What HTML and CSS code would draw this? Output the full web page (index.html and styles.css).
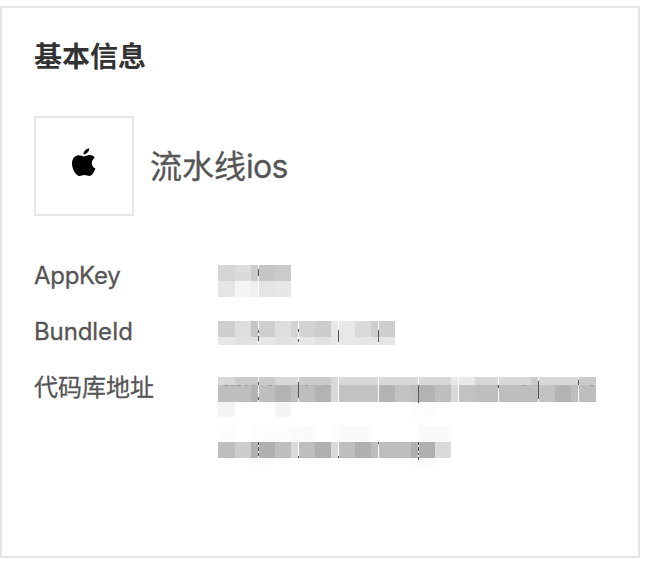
FILE: index.html
```
<!DOCTYPE html>
<html lang="zh-CN">

<head>
    <meta charset="utf-8">
    <title>基本信息</title>
    <link rel="stylesheet" href="styles.css">
</head>

<body>
    <section class="card">
        <h2 class="card-title">基本信息</h2>

        <div class="app">
            <div class="app-icon">
                <svg width="24" height="30" viewBox="0 0 24 30">
                    <path d="M17.2 0.2C17.5 3 14.8 6.3 11.5 6.4C11.2 3.5 14.2 0.7 17.2 0.2Z" />
                    <path d="M12 8.4C13.5 8.4 15.2 7.1 17.7 7.1C20 7.1 21.8 8.2 22.7 9.7C18.6 12.4 19 18.7 23.4 20.5C22.2 23.9 20.2 27.9 17.4 27.9C15.5 27.9 14.7 27.1 12.3 27.1C10 27.1 9.4 28 7.6 28C4.1 28 0 21.4 0 15.5C0 10 3.4 7.2 6.8 7.2C9.1 7.2 10.8 8.4 12 8.4Z" />
                </svg>
            </div>
            <span class="app-name">流水线<span class="app-type">ios</span></span>
        </div>

        <dl class="info">
            <dt class="key-label">AppKey</dt>
            <dd>
                <!-- 打码内容 -->
                <svg class="mosaic" width="73" height="33" viewBox="218 265 73 33">
                    <path fill="#d5d5d5" d="M218 265h17v16h-17z" />
                    <path fill="#dbdbdb" d="M235 265h16v16h-16z" />
                    <path fill="#cbcbcb" d="M251 265h7v16h-7z" />
                    <path fill="#c5c5c5" d="M259 265h16v16h-16z" />
                    <path fill="#cbcbcb" d="M275 265h16v16h-16z" />
                    <path fill="#e5e5e5" d="M218 281h17v16h-17zM259 281h16v16h-16z" />
                    <path fill="#f4f4f4" d="M235 281h16v16h-16z" />
                    <path fill="#efefef" d="M251 281h7v16h-7z" />
                    <path fill="#e7e7e7" d="M275 281h16v16h-16z" />
                    <path fill="#555" d="M258 269h1v7h-1z" />
                </svg>
            </dd>

            <dt class="bundle-label">BundleId</dt>
            <dd>
                <svg class="mosaic" width="177" height="25" viewBox="218 321 177 25">
                    <path fill="#cfcfcf" d="M218 321h17v16h-17zM259 321h16v16h-16z" />
                    <path fill="#dedede" d="M235 321h16v16h-16zM275 321h16v16h-16z" />
                    <path fill="#c5c5c5" d="M251 321h7v16h-7z" />
                    <path fill="#d3d3d3" d="M291 321h7v16h-7zM299 321h16v16h-16z" />
                    <path fill="#cdcdcd" d="M315 321h16v16h-16z" />
                    <path fill="#e8e8e8" d="M331 321h7v24h-7zM339 321h16v24h-16z" />
                    <path fill="#dadada" d="M355 321h16v16h-16z" />
                    <path fill="#cecece" d="M371 321h7v16h-7zM379 321h16v16h-16z" />
                    <path fill="#e7e7e7" d="M218 337h17v8h-17zM259 337h16v8h-16zM299 337h16v8h-16z" />
                    <path fill="#e1e1e1" d="M235 337h23v8h-23zM275 337h23v8h-23zM315 337h16v8h-16z" />
                    <path fill="#e5e5e5" d="M355 337h23v8h-23zM379 337h16v8h-16z" />
                    <path fill="#555" d="M258 330h1v3h-1zM258 336h1v5h-1zM298 329h1v3h-1zM298 339h1v3h-1zM338 330h1v12h-1zM378 330h1v12h-1z" />
                </svg>
            </dd>

            <dt>代码库地址</dt>
            <dd>
                <svg class="mosaic" width="378" height="88" viewBox="218 377 378 88">
                    <path fill="#d8d8d8" d="M218 377h378v8h-378z" />
                    <path fill="#cbcbcb" d="M235 377h40v8h-40zM299 377h32v8h-32zM531 377h7v8h-7zM579 377h17v8h-17z" />
                    <path fill="#bebebe" d="M218 385h378v17h-378z" />
                    <path fill="#b3b3b3" d="M251 385h7v17h-7zM275 385h16v17h-16zM315 385h16v17h-16zM379 385h16v17h-16zM419 385h16v17h-16zM555 385h16v17h-16z" />
                    <path fill="#c2c2c2" d="M339 385h39v17h-39zM395 385h16v17h-16zM459 385h16v17h-16zM539 385h16v17h-16z" />
                    <path fill="#d9d9d9" d="M331 385h7v17h-7zM451 385h7v17h-7z" />
                    <path fill="#e9e9e9" d="M451 377h24v8h-24z" />
                    <path fill="#f4f4f4" d="M218 402h17v15h-17zM275 402h16v15h-16z" />
                    <path fill="#fcfcfc" d="M411 402h24v15h-24zM218 426h17v16h-17zM251 426h40v16h-40zM331 426h7v16h-7zM251 458h24v7h-24z" />
                    <path fill="#fafafa" d="M291 426h24v16h-24zM339 426h32v16h-32zM419 426h32v16h-32zM411 458h24v7h-24z" />
                    <path fill="#bebebe" d="M218 442h17v16h-17zM275 442h16v16h-16zM299 442h16v16h-16zM339 442h16v16h-16zM379 442h32v16h-32z" />
                    <path fill="#cdcdcd" d="M235 442h16v16h-16z" />
                    <path fill="#b0b0b0" d="M251 442h24v16h-24zM315 442h16v16h-16zM355 442h16v16h-16zM411 442h24v16h-24z" />
                    <path fill="#dadada" d="M291 442h7v16h-7zM331 442h7v16h-7zM435 442h16v16h-16z" />
                    <path fill="#bdbdbd" d="M371 442h7v16h-7z" />
                    <path fill="#fff" d="M258 377h1v88h-1zM298 377h1v88h-1zM338 377h1v88h-1zM378 377h1v88h-1zM418 377h1v88h-1zM458 377h1v26h-1zM498 377h1v26h-1zM538 377h1v26h-1zM578 377h1v26h-1z" />
                    <path fill="#555" d="M258 382h1v3h-1zM258 397h1v3h-1zM298 382h1v16h-1zM418 385h1v18h-1zM498 385h1v3h-1zM538 381h1v18h-1zM578 380h1v5h-1z" />
                    <path fill="#555" d="M258 442h1v3h-1zM258 447h1v4h-1zM258 453h1v3h-1zM298 456h1v2h-1zM338 456h1v2h-1zM378 442h1v2h-1zM418 442h1v3h-1zM418 447h1v4h-1zM418 453h1v2h-1zM418 457h1v3h-1z" />
                    <path fill="#999" d="M224 385h5v1h-5zM231 385h4v1h-4zM237 385h4v1h-4zM245 385h3v1h-3zM252 385h2v1h-2zM268 385h4v1h-4zM305 385h3v1h-3zM325 385h2v1h-2zM522 385h3v1h-3zM590 385h3v1h-3z" />
                </svg>
            </dd>
        </dl>
    </section>
</body>

</html>
```
FILE: styles.css
```
body {
    margin: 0;
    padding-top: 6px;
    background: #fff;
    color: #555;
    font-family: Inter, "Noto Sans CJK SC", sans-serif;
}

.card {
    box-sizing: border-box;
    width: 640px;
    height: 552px;
    padding: 29px 32px 28px;
    border: 2px solid #e4e4e4;
}

.card-title {
    margin: 0;
    color: #333;
    font-size: 28px;
    line-height: 40px;
    font-weight: bold;
}

.app {
    display: flex;
    align-items: center;
    gap: 16px;
    margin-top: 39px;
}

.app-icon {
    box-sizing: border-box;
    display: flex;
    justify-content: center;
    width: 100px;
    height: 100px;
    padding-top: 30px;
    border: 2px solid #e6e6e6;
}

.app-name {
    padding-top: 2px;
    font-size: 32px;
    line-height: 40px;
    -webkit-text-stroke: 0.3px #555;
}

.app-type {
    letter-spacing: -0.7px;
}

.info {
    display: grid;
    grid-template-columns: 184px 1fr;
    row-gap: 16px;
    margin: 40px 0 0;
    font-size: 24px;
    line-height: 40px;
}

.info dt {
    height: 40px;
    -webkit-text-stroke: 0.3px #555;
}

.key-label {
    letter-spacing: -0.3px;
}

.bundle-label {
    letter-spacing: -0.1px;
}

.info dd {
    height: 40px;
    margin: 0;
    padding-top: 9px;
    box-sizing: border-box;
}

.mosaic {
    display: block;
    shape-rendering: crispEdges;
}
```
